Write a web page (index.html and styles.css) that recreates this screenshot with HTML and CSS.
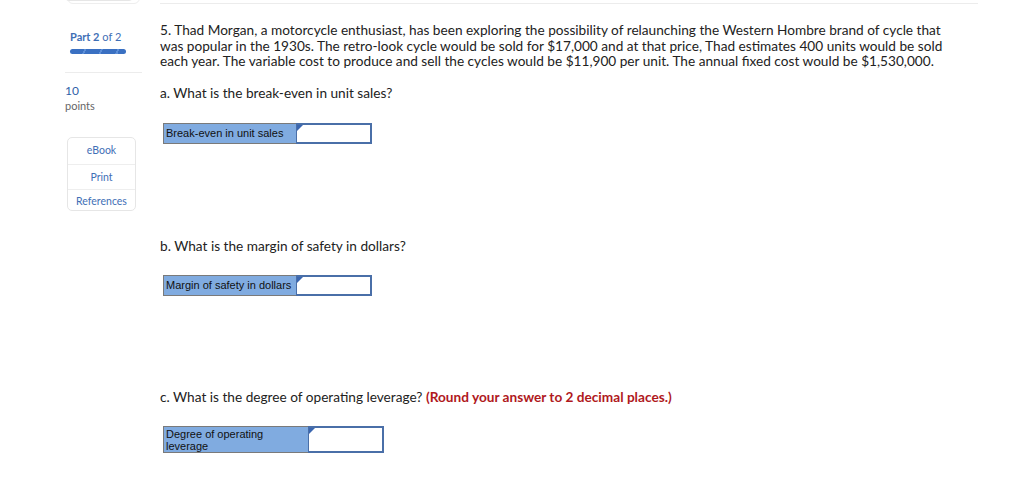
FILE: index.html
```html
<!DOCTYPE html>
<html>
<head>
<meta charset="utf-8">
<link rel="stylesheet" href="styles.css">
</head>
<body>
<div class="page">
  <aside class="side">
    <div class="topcard"><div class="topcard-inner"></div></div>
    <div class="part"><span class="pw">Part </span><b>2</b> of 2</div>
    <div class="bar"></div>
    <div class="sep"></div>
    <div class="pts"><div class="num">10</div><div class="lbl">points</div></div>
    <div class="tools">
      <div class="tool">eBook</div>
      <div class="tool">Print</div>
      <div class="tool">References</div>
    </div>
  </aside>
  <main class="main">
    <div class="topline"></div>
    <p class="q">5. Thad Morgan, a motorcycle enthusiast, has been exploring the possibility of relaunching the Western Hombre brand of cycle that was popular in the 1930s. The retro-look cycle would be sold for $17,000 and at that price, Thad estimates 400 units would be sold each year. The variable cost to produce and sell the cycles would be $11,900 per unit. The annual fixed cost would be $1,530,000.</p>
    <p class="sub">a. What is the break-even in unit sales?</p>
    <div class="ans ans-a">
      <div class="albl">Break-even in unit sales</div>
      <div class="ainp"><span class="flag"></span></div>
    </div>
    <p class="sub sub-b">b. What is the margin of safety in dollars?</p>
    <div class="ans ans-b">
      <div class="albl">Margin of safety in dollars</div>
      <div class="ainp"><span class="flag"></span></div>
    </div>
    <p class="sub sub-c">c. What is the degree of operating leverage? <span class="red">(Round your answer to 2 decimal places.)</span></p>
    <div class="ans ans-c">
      <div class="albl">Degree of operating leverage</div>
      <div class="ainp"><span class="flag"></span></div>
    </div>
  </main>
</div>
</body>
</html>
```
FILE: styles.css
```css
* { box-sizing: border-box; }
html, body { margin: 0; padding: 0; background: #fff; }
body { font-family: "Lato", "Open Sans", sans-serif; color: #222; width: 1024px; height: 483px; overflow: hidden; }
.page { display: flex; }
.side { width: 160px; padding-left: 65px; display: flex; flex-direction: column; }
.topcard { width: 73px; height: 12px; margin-left: 2px; margin-top: -8px; border: 1px solid #eee; border-radius: 0 0 6px 6px; position: relative; }
.topcard-inner { position: absolute; left: -4px; top: -6px; width: 70px; height: 14px; border: 1px solid #e6e6e6; border-radius: 0 0 5px 5px; background: #fff; }
.part { margin-top: 26px; margin-left: 5px; font-size: 11px; color: #3f6fb6; line-height: 14px; }
.part b { font-weight: 700; }
.part .pw { font-weight: 700; }
.bar { margin-top: 5px; margin-left: 5px; width: 56px; height: 5px; border-radius: 3px;
  background: repeating-linear-gradient(115deg, #3a70c2 0 13px, #5d8fd8 13px 15px); }
.sep { margin-top: 18px; width: 77px; height: 1px; background: #ececec; }
.pts { margin-top: 10px; font-size: 11px; line-height: 15px; }
.num { color: #2f5fa8; font-size: 12px; }
.lbl { color: #666; }
.tools { margin-top: 24px; margin-left: 2px; width: 69px; border: 1px solid #e6e6e6; border-radius: 5px; }
.tool { height: 25px; line-height: 25px; text-align: center; font-size: 10.5px; color: #3f6fb6; border-top: 1px solid #eee; }
.tool:first-child { border-top: none; height: 26px; }
.tool:last-child { height: 21px; line-height: 22px; }
.main { width: 818px; }
.topline { height: 1px; background: #ececec; margin-top: 3px; }
.q { margin: 19px 0 0 0; width: 795px; font-size: 13.65px; line-height: 15.5px; color: #222; }
.sub { margin: 15px 0 0 0; font-size: 13.65px; line-height: 16px; }
.sub-b { margin-top: 94px; }
.sub-c { margin-top: 93px; }
.red { color: #b0191d; font-weight: 700; }
.ans { display: flex; margin-left: 3px; margin-top: 22px; }
.ans-b { margin-top: 21px; }
.ans-c { margin-top: 21px; }
.albl { width: 133px; background: #80abe0; border: 1px solid #7a7a7a; border-right: none; font-family: "Liberation Sans", Arial, sans-serif; font-size: 11px; color: #111; padding: 2px 2px; line-height: 14px; height: 21px; }
.ainp { width: 76px; height: 21px; border: 2px solid #4a6fa8; border-left: 1px solid #4a6fa8; background: #fff; position: relative; }
.flag { position: absolute; left: 0; top: 0; width: 0; height: 0; border-top: 3px solid #3a66b0; border-right: 3px solid transparent; border-bottom: 3px solid transparent; border-left: 3px solid #3a66b0; }
.ans-c .albl { width: 145px; height: 27px; line-height: 12px; padding-top: 1px; }
.ans-c .ainp { height: 27px; }
```
